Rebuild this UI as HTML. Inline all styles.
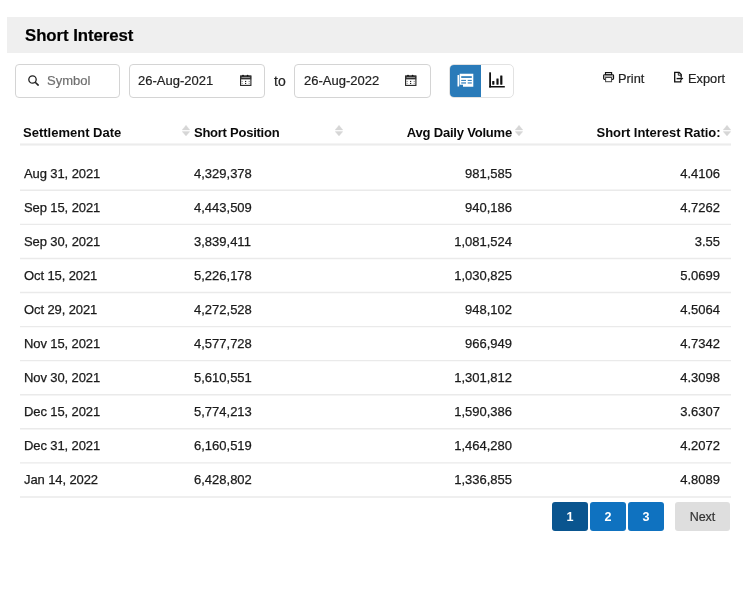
<!DOCTYPE html>
<html><head><meta charset="utf-8">
<style>
*{box-sizing:border-box;margin:0;padding:0}
html,body{width:750px;height:597px;background:#fff;overflow:hidden}
body{font-family:"Liberation Sans",sans-serif;color:#222;position:relative;-webkit-font-smoothing:antialiased}
.abs{position:absolute;will-change:transform}
#hdr{left:7px;top:17px;width:736px;height:36px;background:#efefef}
#title{left:25px;top:27px;font-size:16.8px;letter-spacing:-0.05px;font-weight:bold;color:#000;line-height:18px;white-space:nowrap;-webkit-text-stroke:0.2px #000}
.box{border:1px solid #d4d4d4;border-radius:4px;height:34px;top:64px;background:#fff}
.inp{font-size:13px;line-height:16px;white-space:nowrap;-webkit-text-stroke:0.2px currentColor}
#tgl{left:449px;top:64px;width:65px;height:34px;border:1px solid #e2e2e2;border-radius:5px;overflow:hidden;background:#fff}
#tgl .on{position:absolute;left:-1px;top:-1px;width:32px;height:34px;background:#2a7bb9}
.th{font-size:13px;font-weight:bold;color:#0a0a0a;line-height:16px;top:125px;white-space:nowrap}
.sort{width:8px;height:11px}
.hl{left:20px;width:711px;height:2px;background:#ececec}
.rl{left:20px;width:711px;height:1px;background:#e6e6e6}
.td{font-size:13px;line-height:16px;white-space:nowrap;color:#1a1a1a;-webkit-text-stroke:0.25px #1a1a1a}
.r{text-align:right}
.pg{top:502px;height:29px;border-radius:3px;color:#fff;font-weight:bold;font-size:12.6px;line-height:31px;text-align:center}
</style></head><body>
<div id="hdr" class="abs"></div>
<div id="title" class="abs">Short Interest</div>

<!-- symbol -->
<div class="abs box" style="left:15px;width:105px"></div>
<svg class="abs" style="left:28px;top:75px" width="11" height="11" viewBox="0 0 11 11"><circle cx="4.5" cy="4.5" r="3.7" fill="none" stroke="#222" stroke-width="1.3"/><line x1="7.2" y1="7.2" x2="10.6" y2="10.6" stroke="#222" stroke-width="1.6"/></svg>
<div class="abs inp" style="left:47px;top:73px;color:#6f6f6f">Symbol</div>

<!-- date 1 -->
<div class="abs box" style="left:129px;width:136px"></div>
<div class="abs inp" style="left:138px;top:73px;color:#222">26-Aug-2021</div>
<svg class="abs" style="left:236px;top:71px" width="20" height="20" viewBox="0 0 20 20"><rect x="4.6" y="5" width="10.3" height="9.4" fill="none" stroke="#222" stroke-width="1.1"/><rect x="4.3" y="4.7" width="10.9" height="3.7" fill="#333"/><rect x="5.6" y="6.1" width="8.3" height="0.7" fill="#bbb"/><circle cx="7" cy="4.6" r="0.9" fill="#111"/><circle cx="11.6" cy="4.6" r="0.9" fill="#111"/><rect x="9" y="9.9" width="1.2" height="1.1" fill="#222"/><rect x="9" y="11.9" width="1.2" height="1.1" fill="#222"/><rect x="5.3" y="9.9" width="1.6" height="1" fill="#999"/><rect x="12.5" y="9.9" width="1.6" height="1" fill="#999"/><rect x="5.3" y="11.9" width="1.6" height="1" fill="#aaa"/><rect x="12.5" y="11.9" width="1.6" height="1" fill="#aaa"/></svg>
<div class="abs inp" style="left:273.5px;top:73px;color:#222;font-size:14px">to</div>

<!-- date 2 -->
<div class="abs box" style="left:294px;width:137px"></div>
<div class="abs inp" style="left:304px;top:73px;color:#222">26-Aug-2022</div>
<svg class="abs" style="left:401px;top:71px" width="20" height="20" viewBox="0 0 20 20"><rect x="4.6" y="5" width="10.3" height="9.4" fill="none" stroke="#222" stroke-width="1.1"/><rect x="4.3" y="4.7" width="10.9" height="3.7" fill="#333"/><rect x="5.6" y="6.1" width="8.3" height="0.7" fill="#bbb"/><circle cx="7" cy="4.6" r="0.9" fill="#111"/><circle cx="11.6" cy="4.6" r="0.9" fill="#111"/><rect x="9" y="9.9" width="1.2" height="1.1" fill="#222"/><rect x="9" y="11.9" width="1.2" height="1.1" fill="#222"/><rect x="5.3" y="9.9" width="1.6" height="1" fill="#999"/><rect x="12.5" y="9.9" width="1.6" height="1" fill="#999"/><rect x="5.3" y="11.9" width="1.6" height="1" fill="#aaa"/><rect x="12.5" y="11.9" width="1.6" height="1" fill="#aaa"/></svg>

<!-- toggle -->
<div id="tgl" class="abs"><div class="on"></div></div>
<svg class="abs" style="left:453px;top:70px" width="25" height="20" viewBox="0 0 25 20"><rect x="4.5" y="4.9" width="1.7" height="11.7" rx="0.5" fill="#fff"/><path d="M6.7 3.7 H20.3 V16.8 H10 V14.7 H6.7 Z" fill="#fff"/><rect x="8.2" y="6.2" width="10.6" height="1.7" fill="#2a7bb9"/><rect x="8.2" y="9.9" width="4.8" height="1.0" fill="#2a7bb9"/><rect x="14.7" y="9.9" width="4.1" height="1.0" fill="#2a7bb9"/><rect x="8.2" y="12.2" width="4.8" height="1.5" fill="#5b9acc"/><rect x="14.7" y="12.2" width="4.1" height="1.5" fill="#5b9acc"/></svg>
<svg class="abs" style="left:485px;top:70px" width="25" height="20" viewBox="0 0 25 20"><rect x="4.2" y="2.3" width="1.8" height="15.3" rx="0.5" fill="#111"/><rect x="4.2" y="15.9" width="15.7" height="1.7" rx="0.5" fill="#111"/><rect x="7.2" y="10.9" width="2.2" height="3.8" rx="0.4" fill="#111"/><rect x="11.4" y="8.4" width="2.2" height="6.3" rx="0.4" fill="#111"/><rect x="15.2" y="5.4" width="2.2" height="9.3" rx="0.4" fill="#111"/></svg>

<!-- print / export -->
<svg class="abs" style="left:600px;top:68px" width="20" height="18" viewBox="0 0 20 18"><rect x="5.5" y="4.6" width="6.1" height="2.4" fill="none" stroke="#111" stroke-width="1.15"/><rect x="3.7" y="6.8" width="9.8" height="4.5" rx="0.8" fill="none" stroke="#111" stroke-width="1.25"/><rect x="4.2" y="7.3" width="8.8" height="1.6" fill="#aaa"/><rect x="5.6" y="9.5" width="6" height="4.2" fill="#fff" stroke="#444" stroke-width="1"/></svg>
<div class="abs inp" style="left:618px;top:71px;color:#222;font-size:12.8px">Print</div>
<svg class="abs" style="left:670px;top:68px" width="20" height="18" viewBox="0 0 20 18"><path d="M11.2 9 V6.6 L9.1 4.4 H4.7 V13.9 H10.7 V12.2" fill="none" stroke="#111" stroke-width="1.35"/><path d="M8.3 4.6 V7.2 H11" fill="none" stroke="#222" stroke-width="1"/><path d="M6.6 10.6 H11.5" stroke="#111" stroke-width="1.4"/><path d="M10.6 8.7 L13.4 10.6 L10.6 12.5 Z" fill="#111"/></svg>
<div class="abs inp" style="left:688px;top:71px;color:#222;font-size:12.8px">Export</div>

<!-- table header -->
<div class="abs th" style="left:23px">Settlement Date</div>
<div class="abs th" style="left:194px;letter-spacing:-0.25px">Short Position</div>
<div class="abs th r" style="left:345px;width:167px;letter-spacing:-0.2px">Avg Daily Volume</div>
<div class="abs th r" style="left:525px;width:195.5px;letter-spacing:-0.05px">Short Interest Ratio:</div>
<svg class="abs sort" style="left:182px;top:125px" viewBox="0 0 8 11"><path d="M4 0.3 L7.8 4.9 H0.2 Z M0.2 6.6 H7.8 L4 10.9 Z" fill="#d6d6d6" stroke="#d6d6d6" stroke-width="0.4" stroke-linejoin="round"/></svg>
<svg class="abs sort" style="left:335px;top:125px" viewBox="0 0 8 11"><path d="M4 0.3 L7.8 4.9 H0.2 Z M0.2 6.6 H7.8 L4 10.9 Z" fill="#d6d6d6" stroke="#d6d6d6" stroke-width="0.4" stroke-linejoin="round"/></svg>
<svg class="abs sort" style="left:515px;top:125px" viewBox="0 0 8 11"><path d="M4 0.3 L7.8 4.9 H0.2 Z M0.2 6.6 H7.8 L4 10.9 Z" fill="#d6d6d6" stroke="#d6d6d6" stroke-width="0.4" stroke-linejoin="round"/></svg>
<svg class="abs sort" style="left:723px;top:125px" viewBox="0 0 8 11"><path d="M4 0.3 L7.8 4.9 H0.2 Z M0.2 6.6 H7.8 L4 10.9 Z" fill="#d6d6d6" stroke="#d6d6d6" stroke-width="0.4" stroke-linejoin="round"/></svg>
<div class="abs hl" style="top:143px;height:3px;background:linear-gradient(#f8f8f8,#ececec 50%,#f8f8f8)"></div>

<div class="abs td" style="left:24px;top:166.0px;letter-spacing:-0.1px">Aug 31, 2021</div>
<div class="abs td" style="left:194px;top:166.0px">4,329,378</div>
<div class="abs td r" style="left:345px;width:167px;top:166.0px">981,585</div>
<div class="abs td r" style="left:525px;width:195px;top:166.0px">4.4106</div>
<div class="abs td" style="left:24px;top:200.0px;letter-spacing:-0.1px">Sep 15, 2021</div>
<div class="abs td" style="left:194px;top:200.0px">4,443,509</div>
<div class="abs td r" style="left:345px;width:167px;top:200.0px">940,186</div>
<div class="abs td r" style="left:525px;width:195px;top:200.0px">4.7262</div>
<div class="abs td" style="left:24px;top:234.0px;letter-spacing:-0.1px">Sep 30, 2021</div>
<div class="abs td" style="left:194px;top:234.0px">3,839,411</div>
<div class="abs td r" style="left:345px;width:167px;top:234.0px">1,081,524</div>
<div class="abs td r" style="left:525px;width:195px;top:234.0px">3.55</div>
<div class="abs td" style="left:24px;top:268.0px;letter-spacing:-0.1px">Oct 15, 2021</div>
<div class="abs td" style="left:194px;top:268.0px">5,226,178</div>
<div class="abs td r" style="left:345px;width:167px;top:268.0px">1,030,825</div>
<div class="abs td r" style="left:525px;width:195px;top:268.0px">5.0699</div>
<div class="abs td" style="left:24px;top:302.0px;letter-spacing:-0.1px">Oct 29, 2021</div>
<div class="abs td" style="left:194px;top:302.0px">4,272,528</div>
<div class="abs td r" style="left:345px;width:167px;top:302.0px">948,102</div>
<div class="abs td r" style="left:525px;width:195px;top:302.0px">4.5064</div>
<div class="abs td" style="left:24px;top:336.0px;letter-spacing:-0.1px">Nov 15, 2021</div>
<div class="abs td" style="left:194px;top:336.0px">4,577,728</div>
<div class="abs td r" style="left:345px;width:167px;top:336.0px">966,949</div>
<div class="abs td r" style="left:525px;width:195px;top:336.0px">4.7342</div>
<div class="abs td" style="left:24px;top:370.0px;letter-spacing:-0.1px">Nov 30, 2021</div>
<div class="abs td" style="left:194px;top:370.0px">5,610,551</div>
<div class="abs td r" style="left:345px;width:167px;top:370.0px">1,301,812</div>
<div class="abs td r" style="left:525px;width:195px;top:370.0px">4.3098</div>
<div class="abs td" style="left:24px;top:404.0px;letter-spacing:-0.1px">Dec 15, 2021</div>
<div class="abs td" style="left:194px;top:404.0px">5,774,213</div>
<div class="abs td r" style="left:345px;width:167px;top:404.0px">1,590,386</div>
<div class="abs td r" style="left:525px;width:195px;top:404.0px">3.6307</div>
<div class="abs td" style="left:24px;top:438.0px;letter-spacing:-0.1px">Dec 31, 2021</div>
<div class="abs td" style="left:194px;top:438.0px">6,160,519</div>
<div class="abs td r" style="left:345px;width:167px;top:438.0px">1,464,280</div>
<div class="abs td r" style="left:525px;width:195px;top:438.0px">4.2072</div>
<div class="abs td" style="left:24px;top:472.0px;letter-spacing:-0.1px">Jan 14, 2022</div>
<div class="abs td" style="left:194px;top:472.0px">6,428,802</div>
<div class="abs td r" style="left:345px;width:167px;top:472.0px">1,336,855</div>
<div class="abs td r" style="left:525px;width:195px;top:472.0px">4.8089</div>
<svg class="abs" style="left:0;top:0" width="750" height="597" viewBox="0 0 750 597"><line x1="20" x2="731" y1="190.30" y2="190.30" stroke="#eaeaea" stroke-width="1.4"/><line x1="20" x2="731" y1="224.37" y2="224.37" stroke="#eaeaea" stroke-width="1.4"/><line x1="20" x2="731" y1="258.44" y2="258.44" stroke="#eaeaea" stroke-width="1.4"/><line x1="20" x2="731" y1="292.51" y2="292.51" stroke="#eaeaea" stroke-width="1.4"/><line x1="20" x2="731" y1="326.58" y2="326.58" stroke="#eaeaea" stroke-width="1.4"/><line x1="20" x2="731" y1="360.65" y2="360.65" stroke="#eaeaea" stroke-width="1.4"/><line x1="20" x2="731" y1="394.72" y2="394.72" stroke="#eaeaea" stroke-width="1.4"/><line x1="20" x2="731" y1="428.79" y2="428.79" stroke="#eaeaea" stroke-width="1.4"/><line x1="20" x2="731" y1="462.86" y2="462.86" stroke="#eaeaea" stroke-width="1.4"/><line x1="20" x2="731" y1="496.93" y2="496.93" stroke="#eaeaea" stroke-width="1.4"/></svg>

<!-- pagination -->
<div class="abs pg" style="left:552px;width:36px;background:#0a558f">1</div>
<div class="abs pg" style="left:590px;width:36px;background:#0f72c0">2</div>
<div class="abs pg" style="left:628px;width:36px;background:#0f72c0">3</div>
<div class="abs pg" style="left:675px;width:55px;background:#dedede;color:#333;font-weight:normal;font-size:12.5px;line-height:31px;-webkit-text-stroke:0.2px #333">Next</div>
</body></html>
